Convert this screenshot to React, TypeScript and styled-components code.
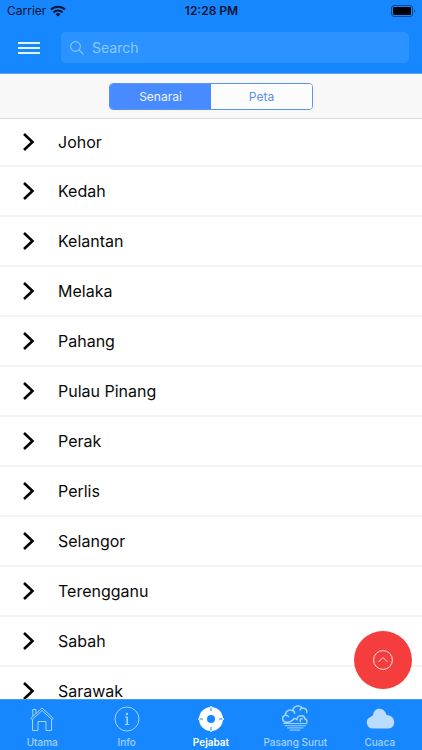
import React, { useRef, useState } from "react";
import styled, { createGlobalStyle } from "styled-components";

const GlobalStyle = createGlobalStyle`
  * { box-sizing: border-box; }
  body { margin: 0; background: #fff; }
  body, button, input { font-family: Inter, "Liberation Sans", sans-serif; }
  button { padding: 0; border: 0; background: none; cursor: pointer; }
`;

const Screen = styled.div`
  display: flex;
  flex-direction: column;
  height: 100vh;
  background: #fff;
`;

const Header = styled.header`
  background: #1787ff;
  border-bottom: 1px solid #5ba6f5;
`;

const StatusBar = styled.div`
  display: grid;
  grid-template-columns: 1fr auto 1fr;
  align-items: center;
  height: 22px;
  padding: 0 6px 0 7px;
  color: #001433;
  font-size: 12px;
  line-height: 16px;
`;

const Carrier = styled.span`
  display: flex;
  align-items: center;
  gap: 4px;
`;

const Clock = styled.span`
  font-weight: 600;
`;

const Battery = styled.svg`
  justify-self: end;
`;

const Toolbar = styled.div`
  display: flex;
  align-items: center;
  gap: 21px;
  padding: 10px 13px 10px 18px;
`;

const MenuButton = styled.button`
  display: flex;
`;

const SearchField = styled.label`
  display: flex;
  flex: 1;
  align-items: center;
  gap: 8px;
  height: 31px;
  padding: 0 9px;
  border-radius: 5px;
  background: #2b93ff;
`;

const SearchInput = styled.input`
  flex: 1;
  min-width: 0;
  padding: 0;
  border: 0;
  outline: 0;
  background: transparent;
  color: #fff;
  font-size: 14px;
  line-height: 20px;
  &::placeholder { color: #8ec8ff; opacity: 1; }
`;

const SegmentBar = styled.div`
  display: flex;
  justify-content: center;
  padding: 9px 0 8px;
  border-bottom: 1px solid #dcdcdc;
  background: #f8f8f8;
`;

const Segments = styled.div`
  display: flex;
  width: 204px;
  height: 27px;
  overflow: hidden;
  border: 1px solid #5b93f5;
  border-radius: 4px;
  background: #fff;
`;

const Segment = styled.button<{ $active: boolean }>`
  flex: 1;
  background: ${(p) => (p.$active ? "#488aff" : "#fcfcfc")};
  color: ${(p) => (p.$active ? "#eef5ff" : "#5b8ff0")};
  font-size: 12px;
  line-height: 16px;
`;

const Main = styled.main`
  position: relative;
  flex: 1;
  min-height: 0;
`;

const List = styled.div`
  height: 100%;
  overflow-y: auto;
  scrollbar-width: none;
`;

const Row = styled.button`
  display: flex;
  align-items: center;
  gap: 23px;
  width: 100%;
  height: 50px;
  padding: 0 22px;
  border-bottom: 2px solid #f3f3f3;
  color: #0a0a0a;
  font-size: 16px;
  line-height: 20px;
  text-align: left;
  &:first-child { height: 48px; }
`;

const TopButton = styled.button`
  position: absolute;
  right: 10px;
  bottom: 10px;
  display: flex;
  align-items: center;
  justify-content: center;
  width: 58px;
  height: 58px;
  border-radius: 50%;
  background: #f53d3d;
`;

const TabBar = styled.nav`
  display: grid;
  grid-template-columns: repeat(5, 1fr);
  height: 51px;
  border-top: 1px solid #4a99ef;
  background: #1787ff;
`;

const Tab = styled.a<{ $active: boolean }>`
  display: flex;
  flex-direction: column;
  align-items: center;
  padding-top: 4px;
  gap: 1px;
  color: ${(p) => (p.$active ? "#fff" : "#a5d3ff")};
  font-size: 10px;
  font-weight: ${(p) => (p.$active ? 600 : 500)};
  line-height: 14px;
  text-decoration: none;
  white-space: nowrap;
`;

const svgProps = {
  width: 30,
  height: 30,
  viewBox: "0 0 30 30",
  fill: "none",
  stroke: "currentColor",
  "aria-hidden": true,
} as const;

const HouseIcon = () => (
  <svg {...svgProps} strokeWidth="1">
    <path d="M3.800 14.300 15 4l11.200 10.300-1.200 1.400L15 6.500 5 15.700z" />
    <path d="M5.500 15.500v11h5.500v-9h8v9h5.500v-11M5.800 12.300V5.500H9v3.800" />
  </svg>
);

const InfoIcon = () => (
  <svg {...svgProps} strokeWidth="1">
    <circle cx="15" cy="15" r="12" />
    <circle cx="15" cy="10" r="1.200" fill="currentColor" stroke="none" />
    <path d="M13 13h2.500M13 20.500h4.200" />
    <path d="M15.200 13v7.500" strokeWidth="1.600" />
  </svg>
);

const TargetIcon = () => (
  <svg {...svgProps}>
    <circle cx="15" cy="15" r="8" strokeWidth="8" />
    <path d="M15 2v2M15 26v2M2 15h2M26 15h2" strokeWidth="1.500" />
    <path d="M15 3.500V7M15 23v3.500M3.500 15H7M23 15h3.500" stroke="#1787ff" strokeWidth="1" />
  </svg>
);

const TideIcon = () => (
  <svg {...svgProps} strokeWidth="1.500" strokeLinecap="round">
    <path d="M5 18C1.500 16.500 2 12 5.500 11.300 5 7.500 9 5 12.700 6.500 13.500 1.500 20.500.500 22.500 4.200c3-.4 5 1.800 4.200 4.300" />
    <path d="M12.700 6.500c1.300.5 2 1.500 1.800 2.800M5.500 11.300c1.500-.2 2.500.4 3 1.500M22.500 4.200c-1.300 0-2.300.7-2.600 1.900" />
    <path d="M5 18c4 .8 7-.5 9-3.500 1.500-.3 2.500.2 3 1.300M17 14.500c1.500-4 7.500-3.500 8 .500 1.500.2 2.300 1.500 1.800 3M22 14.800c-1.500-.3-2.500 1.500-1.500 2.700" />
    <path d="M3.500 19.500h23.500M5 21.700h20.500M7.500 23.900H23M10 26.100h10" strokeWidth="1" />
  </svg>
);

const CloudIcon = () => (
  <svg {...svgProps}>
    <path d="M7 24.500A6 6 0 0 1 5.500 13C7 11.800 8 12 8.200 10.500 9.200 3 19.500 2.800 21.500 11 31.500 11 31.500 24.500 23.500 24.500z" fill="#badcff" stroke="none" />
  </svg>
);

const states = [
  "Johor", "Kedah", "Kelantan", "Melaka", "Pahang", "Pulau Pinang",
  "Perak", "Perlis", "Selangor", "Terengganu", "Sabah", "Sarawak",
];

const tabs = [
  { label: "Utama", Icon: HouseIcon },
  { label: "Info", Icon: InfoIcon },
  { label: "Pejabat", Icon: TargetIcon },
  { label: "Pasang Surut", Icon: TideIcon },
  { label: "Cuaca", Icon: CloudIcon },
];

export default function App() {
  const [view, setView] = useState("Senarai");
  const [tab, setTab] = useState("Pejabat");
  const list = useRef<HTMLDivElement>(null);

  return (
    <Screen>
      <GlobalStyle />
      <Header>
        <StatusBar>
          <Carrier>
            Carrier
            <svg width="16" height="12" viewBox="0 0 16 12" fill="none" stroke="currentColor" strokeWidth="2.100" aria-hidden="true">
              <path d="M1 4.600a10 10 0 0 1 14 0M3.500 7.400a6.400 6.400 0 0 1 9 0" />
              <path d="M8 11.500 5.600 9.200a3.400 3.400 0 0 1 4.800 0z" fill="currentColor" stroke="none" />
            </svg>
          </Carrier>
          <Clock>12:28 PM</Clock>
          <Battery width="25" height="12" viewBox="0 0 25 12" aria-hidden="true">
            <rect x=".5" y=".5" width="21" height="11" rx="2.500" fill="none" stroke="#0b4a92" />
            <rect x="2" y="2" width="18" height="8" rx="1" fill="#000" />
            <path d="M23 4.200c1.600.6 1.600 3 0 3.600z" fill="#0b4a92" />
          </Battery>
        </StatusBar>
        <Toolbar>
          <MenuButton aria-label="Menu">
            <svg width="22" height="14" viewBox="0 0 22 14" stroke="#e0f6ff" strokeWidth="2" aria-hidden="true">
              <path d="M0 2h22M0 7h22M0 12h22" />
            </svg>
          </MenuButton>
          <SearchField>
            <svg width="14" height="14" viewBox="0 0 14 14" fill="none" stroke="#86c5ff" strokeWidth="1.100" aria-hidden="true">
              <circle cx="5.500" cy="5.500" r="4.900" />
              <path d="m9 9 4.500 4.500" />
            </svg>
            <SearchInput type="search" placeholder="Search" aria-label="Search" />
          </SearchField>
        </Toolbar>
      </Header>
      <SegmentBar>
        <Segments>
          {["Senarai", "Peta"].map((name) => (
            <Segment key={name} $active={view === name} aria-pressed={view === name} onClick={() => setView(name)}>
              {name}
            </Segment>
          ))}
        </Segments>
      </SegmentBar>
      <Main>
        <List ref={list}>
          {states.map((name) => (
            <Row key={name}>
              <svg width="13" height="18" viewBox="0 0 13 18" fill="none" stroke="#000" strokeWidth="2.600" aria-hidden="true">
                <path d="m2 1 8.500 8L2 17" />
              </svg>
              {name}
            </Row>
          ))}
        </List>
        <TopButton aria-label="Back to top" onClick={() => list.current?.scrollTo({ top: 0 })}>
          <svg width="20" height="20" viewBox="0 0 20 20" fill="none" stroke="#ffe4e4" aria-hidden="true">
            <circle cx="10" cy="10" r="9.400" />
            <path d="m5.500 12 4.500-4.500 4.500 4.500" />
          </svg>
        </TopButton>
      </Main>
      <TabBar>
        {tabs.map(({ label, Icon }) => (
          <Tab key={label} href="#" $active={tab === label} onClick={() => setTab(label)}>
            <Icon />
            {label}
          </Tab>
        ))}
      </TabBar>
    </Screen>
  );
}
